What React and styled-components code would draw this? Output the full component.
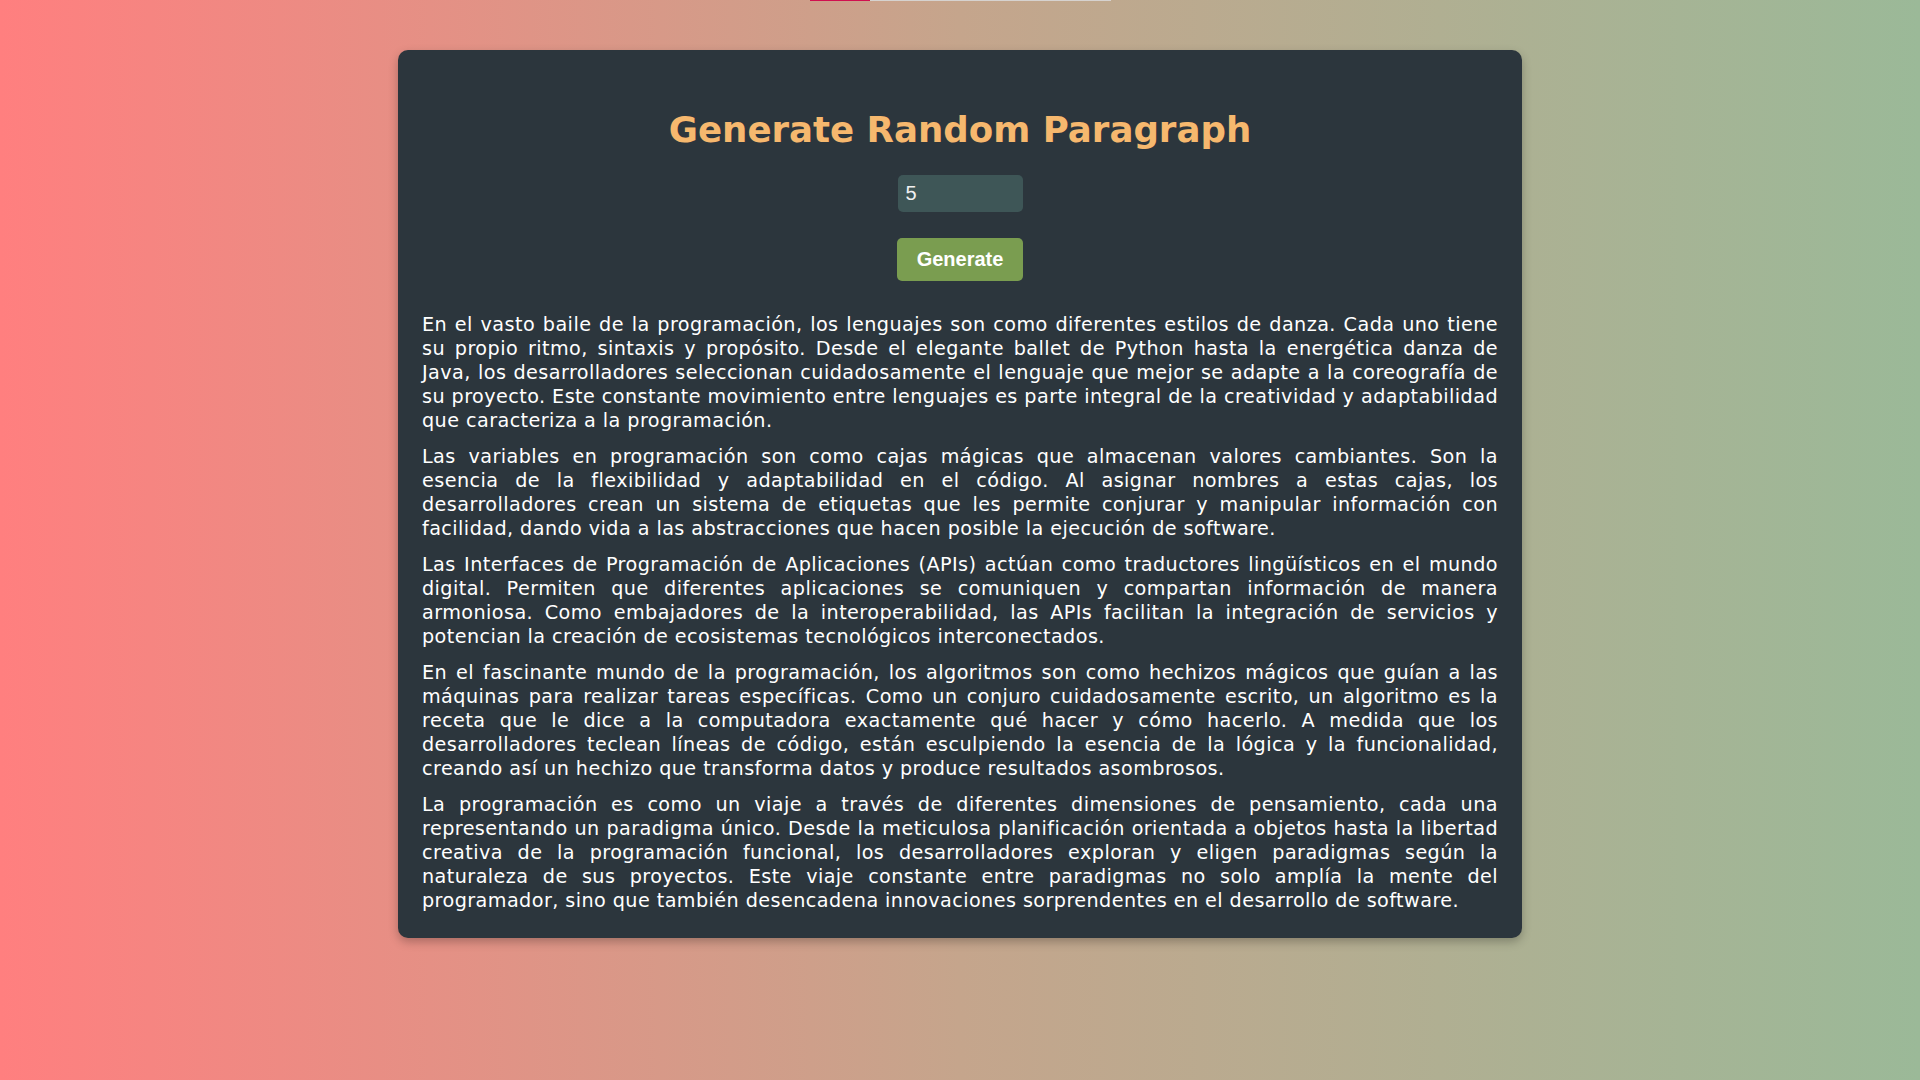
import React, { useState } from 'react'
import styled, { createGlobalStyle } from 'styled-components'

const GlobalStyle = createGlobalStyle`
  html, body {
    margin: 0;
    padding: 0;
  }
  body {
    min-height: 100vh;
    background: linear-gradient(to right, #ff7f7f, #c5a58c 50%, #9bb998);
    font-family: "DejaVu Sans", Verdana, sans-serif;
  }
`

const Page = styled.div`
  display: flex;
  flex-direction: column;
  align-items: center;
  min-height: 100vh;
`

const TopBar = styled.div`
  width: 301px;
  height: 1px;
  background: #d6d2cf;
  display: flex;
`

const TopBarFill = styled.div`
  width: ${p => p.$pct}%;
  background: #d0104f;
`

const Card = styled.div`
  box-sizing: border-box;
  width: 1124px;
  margin-top: 49px;
  padding: 0 24px 25px;
  background: #2c363d;
  border-radius: 10px;
  box-shadow: 0 4px 10px rgba(0, 0, 0, 0.25);
  display: flex;
  flex-direction: column;
  align-items: center;
`

const Title = styled.h1`
  margin: 59px 0 0;
  font-size: 35.6px;
  line-height: 41px;
  font-weight: bold;
  color: #f6b86e;
  text-align: center;
`

const CountInput = styled.input`
  box-sizing: border-box;
  margin-top: 25px;
  width: 125px;
  height: 37px;
  padding: 0 8px;
  border: none;
  border-radius: 5px;
  background: #3e5657;
  color: #f0f0f0;
  font-family: "Liberation Sans", Arial, sans-serif;
  font-size: 20px;
  outline: none;
`

const GenerateButton = styled.button`
  box-sizing: border-box;
  margin-top: 26px;
  width: 126px;
  height: 43px;
  border: none;
  border-radius: 5px;
  background: #7a9d50;
  color: #ffffff;
  font-family: "Liberation Sans", Arial, sans-serif;
  font-weight: bold;
  font-size: 20px;
  cursor: pointer;
`

const Paragraphs = styled.div`
  margin-top: 32px;
  width: 100%;
  display: flex;
  flex-direction: column;
  gap: 12px;
`

const Paragraph = styled.p`
  margin: 0;
  color: #ffffff;
  font-size: 19.2px;
  letter-spacing: 0.43px;
  line-height: 24px;
  text-align: justify;
`

const texts = [
  'En el vasto baile de la programación, los lenguajes son como diferentes estilos de danza. Cada uno tiene su propio ritmo, sintaxis y propósito. Desde el elegante ballet de Python hasta la energética danza de Java, los desarrolladores seleccionan cuidadosamente el lenguaje que mejor se adapte a la coreografía de su proyecto. Este constante movimiento entre lenguajes es parte integral de la creatividad y adaptabilidad que caracteriza a la programación.',
  'Las variables en programación son como cajas mágicas que almacenan valores cambiantes. Son la esencia de la flexibilidad y adaptabilidad en el código. Al asignar nombres a estas cajas, los desarrolladores crean un sistema de etiquetas que les permite conjurar y manipular información con facilidad, dando vida a las abstracciones que hacen posible la ejecución de software.',
  'Las Interfaces de Programación de Aplicaciones (APIs) actúan como traductores lingüísticos en el mundo digital. Permiten que diferentes aplicaciones se comuniquen y compartan información de manera armoniosa. Como embajadores de la interoperabilidad, las APIs facilitan la integración de servicios y potencian la creación de ecosistemas tecnológicos interconectados.',
  'En el fascinante mundo de la programación, los algoritmos son como hechizos mágicos que guían a las máquinas para realizar tareas específicas. Como un conjuro cuidadosamente escrito, un algoritmo es la receta que le dice a la computadora exactamente qué hacer y cómo hacerlo. A medida que los desarrolladores teclean líneas de código, están esculpiendo la esencia de la lógica y la funcionalidad, creando así un hechizo que transforma datos y produce resultados asombrosos.',
  'La programación es como un viaje a través de diferentes dimensiones de pensamiento, cada una representando un paradigma único. Desde la meticulosa planificación orientada a objetos hasta la libertad creativa de la programación funcional, los desarrolladores exploran y eligen paradigmas según la naturaleza de sus proyectos. Este viaje constante entre paradigmas no solo amplía la mente del programador, sino que también desencadena innovaciones sorprendentes en el desarrollo de software.',
]

export default function App() {
  const [count, setCount] = useState('5')

  return (
    <>
      <GlobalStyle />
      <Page>
        <TopBar>
          <TopBarFill $pct={20} />
        </TopBar>
        <Card>
          <Title>Generate Random Paragraph</Title>
          <CountInput
            type="text"
            value={count}
            onChange={e => setCount(e.target.value)}
          />
          <GenerateButton>Generate</GenerateButton>
          <Paragraphs>
            {texts.slice(0, Number(count) || 0).map((t, i) => (
              <Paragraph key={i}>{t}</Paragraph>
            ))}
          </Paragraphs>
        </Card>
      </Page>
    </>
  )
}
